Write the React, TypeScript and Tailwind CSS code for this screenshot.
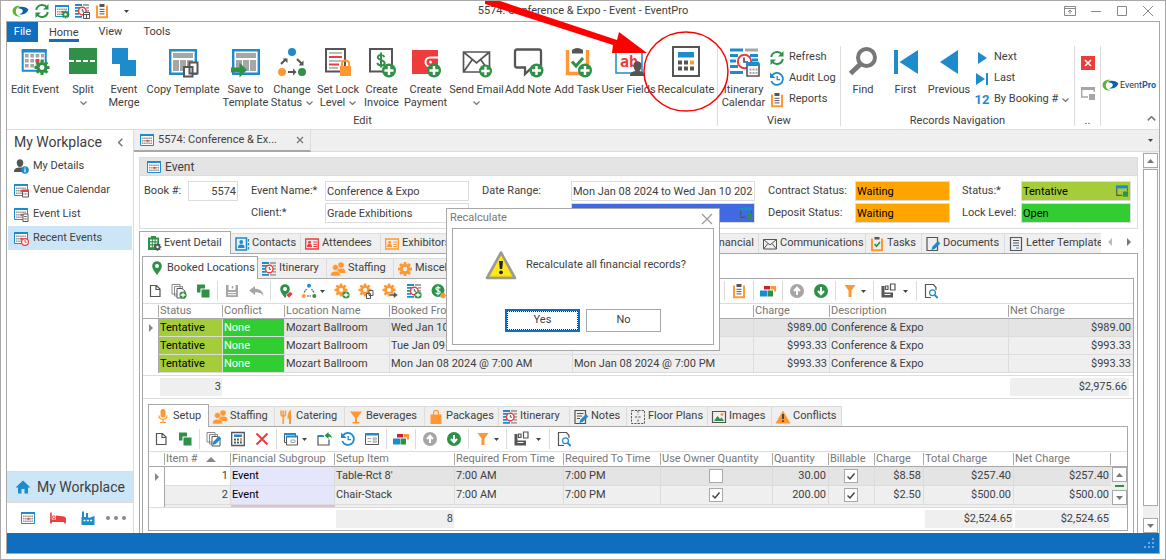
import { useState, type ReactNode } from 'react'
import clsx from 'clsx'

const BLUE = '#1e8bcd'
const GREEN = '#2f9148'
const RED = '#ee3b3b'
const ORANGE = '#ff9832'
const GRAY = '#a6a6a6'
const DARK = '#555555'

/* ---------- icon parts ---------- */

function Svg({ children, box = 16, className = 'size-4' }: { children: ReactNode; box?: number; className?: string }) {
  return (
    <svg viewBox={`0 0 ${box} ${box}`} className={clsx('shrink-0', className)} fill="none" aria-hidden="true">
      {children}
    </svg>
  )
}

function Plus({ x, y, r }: { x: number; y: number; r: number }) {
  return (
    <g>
      <circle cx={x} cy={y} r={r} fill={GREEN} />
      <path d={`M${x - r * 0.65} ${y}h${r * 1.3}M${x} ${y - r * 0.65}v${r * 1.3}`} stroke="#fff" strokeWidth={r * 0.35} />
    </g>
  )
}

function Gear({ x, y, r, color = ORANGE, hole = '#fff' }: { x: number; y: number; r: number; color?: string; hole?: string }) {
  return (
    <g transform={`translate(${x} ${y})`} fill={color}>
      <circle r={r * 0.74} />
      {[0, 45, 90, 135].map((a) => (
        <rect key={a} x={-r * 0.2} y={-r} width={r * 0.4} height={r * 2} transform={`rotate(${a})`} />
      ))}
      <circle r={r * 0.32} fill={hole} />
    </g>
  )
}

function CalendarGrid({ children }: { children?: ReactNode }) {
  return (
    <Svg>
      <path d="M1.5 2.5h13v11h-13z" fill="#fff" stroke={BLUE} />
      <path d="M1 2h14v2H1z" fill={BLUE} />
      <path d="M3 6.2h10M3 8.7h10M3 11.2h10" stroke="#999" strokeWidth="1.5" strokeDasharray="1.6 .5" />
      <path d="M7.5 7.8h2v2h-2z" fill={RED} />
      {children}
    </Svg>
  )
}

const CalendarGear = () => <CalendarGrid><Gear x={11.5} y={11.5} r={4} color={GREEN} /></CalendarGrid>
const CalendarRed = () => (
  <CalendarGrid>
    <path d="M9.5 8.5h6v6.500h-6z" fill="#fff" stroke={DARK} /><path d="M9 7.500h7v2.500H9z" fill={RED} />
    <path d="M10.5 12h4" stroke={DARK} strokeDasharray="1 .5" />
  </CalendarGrid>
)
const CalendarList = () => (
  <CalendarGrid>
    <path d="M10 8h5v7.5h-5z" fill="#fff" stroke={DARK} /><path d="M11.3 10.5h2.4M11.3 13h2.4" stroke={DARK} />
  </CalendarGrid>
)
const CalendarClock = () => (
  <CalendarGrid>
    <circle cx="12" cy="12" r="3.4" fill="#fff" stroke={RED} strokeWidth="1.2" /><path d="M12 10v2.2h1.5" stroke={RED} />
  </CalendarGrid>
)

function Itinerary({ badge }: { badge?: 'cal' | 'plus' }) {
  return (
    <Svg>
      <path d="M1 2h7M1 4.8h5M1 7.800h4M1 10.800h4M1 13.800h7" stroke={BLUE} strokeWidth="1.8" />
      <path d="M9 2h6M12 4.8h3M12 7.8h3M12 10.8h3M9 13.8h6" stroke={GRAY} strokeWidth="1.8" />
      <circle cx="8.3" cy="8" r="3.8" fill="#fff" stroke={RED} strokeWidth="1.4" />
      <path d="M8.3 6v2.2H10" stroke={DARK} />
      {badge === 'cal' && <path d="M9.5 9.5h6v6h-6zM9.5 11.5h6M12.5 11.5v4" fill="#fff" stroke={DARK} />}
      {badge === 'plus' && <Plus x={12} y={12} r={3.6} />}
    </Svg>
  )
}

const Refresh = () => (
  <Svg>
    <path d="M2.2 7A6 6 0 0 1 13 4.5M13.8 9A6 6 0 0 1 3 11.5" stroke={GREEN} strokeWidth="2" />
    <path d="M14.5 1v5.5H9zM1.5 15V9.5H7z" fill={GREEN} />
  </Svg>
)
const History = () => (
  <Svg>
    <path d="M3 4.5A6 6 0 1 1 2.3 10" stroke={BLUE} strokeWidth="1.8" /><path d="M1 1.5v5.5h5.5z" fill={BLUE} />
    <path d="M8.2 5v3.7H11" stroke={BLUE} strokeWidth="1.3" />
  </Svg>
)
const Clipboard = () => (
  <Svg>
    <path d="M3 2.5v11.7h10V2.5" stroke={ORANGE} strokeWidth="2" /><path d="M5.5 1h5v3h-5z" fill={DARK} />
    <path d="M5.5 6.3h5M5.5 8.6h5M5.5 10.9h5" stroke={DARK} />
  </Svg>
)
const Task = () => (
  <Svg>
    <path d="M3 2.5v11.7h10V2.5" stroke={ORANGE} strokeWidth="2" /><path d="M5.5 1h5v2.5h-5z" fill={DARK} />
    <path d="m5.5 8 2 2.3L11 6" stroke={GREEN} strokeWidth="1.6" />
  </Svg>
)
const PersonInfo = () => (
  <Svg>
    <path d="M3.7 4.5c0-4.5 6.600-4.500 6.600 0 0 2.500-1.300 4.500-3.300 4.500S3.700 7 3.700 4.500zM1 14c0-3.500 2.500-4.500 6-4.500h2V14z" fill={DARK} />
    <circle cx="12" cy="12" r="3.8" fill={BLUE} /><path d="M12 11.3v3M12 9.4v1.2" stroke="#fff" strokeWidth="1.3" />
  </Svg>
)
const Building = () => (
  <Svg>
    <path d="M2 2.5h3V1h5v1.5h3V15H2z" fill={GREEN} />
    <path d="M4 5.300h7.500M4 8.300h7.500M4 11.300h4" stroke="#fff" strokeWidth="1.8" strokeDasharray="1.800 1" />
    <Gear x={11.5} y={12} r={3.8} color={DARK} />
  </Svg>
)
const ContactBook = () => (
  <Svg>
    <path d="M2 2h10.5v12H2z" stroke={BLUE} strokeWidth="1.5" /><path d="M14.5 3v2.5M14.5 7v2.5M14.5 11v2.5" stroke={BLUE} strokeWidth="1.3" />
    <circle cx="7.2" cy="6" r="1.9" fill={BLUE} /><path d="M4 12c0-3 1-3.5 3.2-3.5s3.3.5 3.3 3.5z" fill={BLUE} />
  </Svg>
)
const Badge = ({ color }: { color: string }) => (
  <Svg>
    <path d="M1.7 3h12.6v10H1.7z" stroke={color} strokeWidth="1.3" />
    <circle cx="5.5" cy="6.3" r="1.5" fill={color} /><path d="M3 11c0-2.5 1-3 2.500-3S8 8.500 8 11z" fill={color} />
    <path d="M9.3 6H13M9.3 8.3H13M9.3 10.5H13" stroke={color} />
  </Svg>
)
const Mail = () => (
  <Svg>
    <path d="M1.5 3.5h13v9.5h-13zM1.5 3.5 8 9l6.5-5.5M1.5 13 6 7.5M14.5 13 10 7.5" stroke={DARK} />
  </Svg>
)
const Pencil = () => <path d="m6.5 14 .8-3.2 5.7-5.7 2.3 2.3-5.7 5.7z" fill={BLUE} />
const DocumentEdit = () => (
  <Svg><path d="M2 1.5h10.5v13H2z" stroke={DARK} strokeWidth="1.2" /><Pencil /></Svg>
)
const NoteEdit = () => (
  <Svg>
    <path d="M2 1.5h10.5v13H2z" stroke={DARK} strokeWidth="1.2" /><path d="M4 4.5h6.5M4 7h5M4 9.5h3" stroke={DARK} /><Pencil />
  </Svg>
)
const Letter = () => (
  <Svg>
    <path d="M2.5 1.5h11v13h-11z" stroke={DARK} strokeWidth="1.2" /><path d="M5 4.5h6M5 7h6" stroke={DARK} />
    <path d="M5 9.5h6M8 12h3" stroke={BLUE} />
  </Svg>
)
const Pin = ({ tag }: { tag?: boolean }) => (
  <Svg>
    <path d="M8 15C5 11 3.2 8.5 3.2 6a4.8 4.8 0 0 1 9.6 0C12.8 8.5 11 11 8 15z" fill={GREEN} /><circle cx="8" cy="6" r="2" fill="#fff" />
    {tag && <path d="m9 12 4-3.5L16 11l-4 4z" fill={RED} stroke="#fff" strokeWidth=".6" />}
  </Svg>
)
const People = () => (
  <Svg>
    <circle cx="11" cy="4" r="2.8" fill={ORANGE} /><path d="M6.5 12c0-4 2-4.500 4.500-4.500s4.500.5 4.500 4.500z" fill={ORANGE} />
    <circle cx="5.5" cy="6.5" r="3" fill={ORANGE} stroke="#eee" strokeWidth=".6" />
    <path d="M.5 15c0-4 2-4.800 5-4.800s5 .8 5 4.800z" fill={ORANGE} stroke="#eee" strokeWidth=".6" />
  </Svg>
)
const GearIcon = () => <Svg><Gear x={8} y={8} r={7} hole="#efefef" /></Svg>
const GearPlus = () => <Svg><Gear x={7} y={7} r={6.5} /><Plus x={12} y={12} r={3.6} /></Svg>
const GearCopy = () => (
  <Svg>
    <Gear x={7} y={7} r={6.5} /><path d="M11 7.5h4v5h-4zM8.500 10.5h4v5h-4z" fill="#fff" stroke={DARK} />
  </Svg>
)
const GearArrow = () => (
  <Svg>
    <Gear x={7} y={7} r={6.5} /><path d="M7 11h4.5V8.500L16 12l-4.500 3.500V13H7z" fill={DARK} stroke="#fff" strokeWidth=".5" />
  </Svg>
)
const Mic = () => (
  <Svg>
    <rect x="5.5" y="1" width="5" height="8.5" rx="2.5" fill={ORANGE} /><path d="M4 7.500c0 5 8 5 8 0M8 11.5V14M5 14.5h6" stroke={ORANGE} strokeWidth="1.2" />
  </Svg>
)
const Cutlery = () => (
  <Svg>
    <path d="M3 1.5V5c0 3 4.5 3 4.5 0V1.500M5.200 1.500V15" stroke={ORANGE} strokeWidth="1.5" /><path d="M13 1v14h-2V9.500H9.500C9.500 4 11 1.500 13 1z" fill={ORANGE} />
  </Svg>
)
const Drink = () => <Svg><path d="M2 2.5h12L9 9v4h2.5v1.5h-7V13H7V9z" fill={ORANGE} /></Svg>
const Bag = () => (
  <Svg><path d="M2.5 5.5h11V15h-11z" fill={ORANGE} /><path d="M5.5 8V4c0-3.500 5-3.500 5 0v4" stroke={ORANGE} strokeWidth="1.2" /></Svg>
)
const FloorPlan = () => (
  <Svg>
    <path d="M1.5 1.5h13v13h-13zM8 1.5v4M8 10.5v4M5 8h6" stroke={DARK} strokeDasharray="2.2 1.2" />
  </Svg>
)
const Picture = () => (
  <Svg>
    <path d="M1.5 2.5h13v11h-13z" stroke={DARK} strokeWidth="1.2" /><path d="m3 12 3.5-5 2.5 3 1.5-1.5 2.5 3.5z" fill={GREEN} /><circle cx="11" cy="5.5" r="1.4" fill={ORANGE} />
  </Svg>
)
const Conflict = () => (
  <Svg><path d="M8 1.5 15.5 14.5H.5z" fill={ORANGE} /><path d="M8 5v5M8 11.3v1.8" stroke="#333" strokeWidth="1.6" /></Svg>
)
const NewDoc = () => <Svg><path d="M3.5 2.5h6l3.5 3.5v7.500H3.500zM9 2.5V6.500h4" stroke={DARK} strokeWidth="1.2" /></Svg>
const Copies = ({ edit }: { edit?: boolean }) => (
  <Svg>
    <path d="M1 1.5h8V11H1zM3.5 3.5h8V13h-8z" fill="#fff" stroke="#888" /><path d="M6 5.5h5l3 2.5v7H6z" fill="#fff" stroke={DARK} />
    {edit ? <Pencil /> : <Plus x={12} y={12} r={3.6} />}
  </Svg>
)
const Duplicate = () => <Svg><path d="M2 1.5h8v4H5.5v4H2zM6.5 6.5h8v8h-8z" fill={GREEN} /></Svg>
const Save = () => (
  <Svg>
    <path d="M2 2h12v12H2z" fill={GRAY} /><path d="M5 2h6v4.5H5zM4 9.500h8M4 11.700h8" fill="#fff" stroke="#fff" /><path d="M8.5 3v2.5" stroke={GRAY} strokeWidth="1.5" />
  </Svg>
)
const Undo = () => <Svg><path d="M1 7.5 7 3v2.800c4.500 0 8 2.200 8.500 7.200C13.500 10 11 9.300 7 9.300V12z" fill={GRAY} /></Svg>
const StatusFlow = () => (
  <Svg>
    <circle cx="8" cy="2.7" r="2" fill={BLUE} /><circle cx="2.7" cy="13" r="2" fill={ORANGE} /><circle cx="13.3" cy="13" r="2" fill={GREEN} />
    <path d="M3 9.5 5.5 6M13 9.5 10.500 6M6 13h4" stroke={DARK} strokeWidth="1.2" strokeDasharray="2 .6" />
  </Svg>
)
const Money = () => (
  <Svg>
    <circle cx="8" cy="7.5" r="6.5" fill={GREEN} /><path d="M10.3 5.300C9 3.600 5.700 4.200 5.900 6c.2 1.700 4.200 1.300 4.300 3.100C10.300 11 7 11.300 5.600 9.600M8 2.800v9.500" stroke="#fff" strokeWidth="1.2" />
    <Gear x={13} y={12.5} r={3} hole={ORANGE} />
  </Svg>
)
const Blocks = () => (
  <Svg>
    <path d="M0 7.5h7v6H0z" fill={BLUE} /><path d="M7.500 7.500H13v6H7.500z" fill={GREEN} /><path d="M4 3h6v3.500H4z" fill="#d02030" /><path d="M10.500 3H16v5.500h-2V6.500h-3.500z" fill={ORANGE} />
  </Svg>
)
const CircleArrow = ({ up }: { up?: boolean }) => (
  <Svg>
    <circle cx="8" cy="8" r="7" fill={up ? GRAY : GREEN} />
    <path d={up ? 'M8 12V5.500M5 8l3-3.200L11 8' : 'M8 4v6.500M5 8l3 3.200L11 8'} stroke="#fff" strokeWidth="2" />
  </Svg>
)
const Filter = () => <Svg><path d="M2.5 2h11L9.500 7.500V14h-3V7.500z" fill={ORANGE} /></Svg>
const SaveLayout = () => (
  <Svg>
    <path d="M1.5 3v11.5H13V9.500H4.500V3z" fill={DARK} /><path d="M4.5 11.5h6" stroke="#fff" /><path d="M5.5 3h2.500v3.500H5.500zM10.500 1h4.500v6h-4.500z" stroke={DARK} strokeWidth="1.2" />
  </Svg>
)
const Preview = () => (
  <Svg>
    <path d="M13 7V4.500L10.500 1.500H2.500v13H8" stroke={DARK} strokeWidth="1.2" /><circle cx="9.5" cy="9.8" r="2.9" stroke={BLUE} strokeWidth="1.2" /><path d="m11.7 12 3 3" stroke={BLUE} strokeWidth="1.8" />
  </Svg>
)
const Calculator = () => (
  <Svg>
    <path d="M1.7 1.5h12.6v13H1.700z" stroke={DARK} strokeWidth="1.3" /><path d="M4 3.500h8V6H4z" fill={BLUE} />
    <path d="M4 8.5h8M4 11.5h8" stroke={DARK} strokeWidth="1.8" strokeDasharray="1.9 1.1" /><path d="M10 7.600h2v1.800h-2z" fill={ORANGE} />
  </Svg>
)
const Delete = () => <Svg><path d="m2.5 2.5 11 11M13.5 2.5l-11 11" stroke={RED} strokeWidth="2" /></Svg>
const Windows = () => (
  <Svg>
    <path d="M1.5 2.5h11v9h-11z" stroke={DARK} /><path d="M3.5 5.5h11V14h-11z" fill="#fff" stroke={DARK} /><path d="M1 2h12v2H1zM3 4.500h12v2H3z" fill={BLUE} /><path d="M8 9h4v2.500H8z" stroke={GRAY} />
  </Svg>
)
const FolderOut = () => (
  <Svg>
    <path d="M8 5.5H2V14h11V8.500" stroke={DARK} strokeWidth="1.2" /><path d="M1.5 4h6v2h-6z" fill={BLUE} /><path d="m8.500 4.500 4-3.500v2c2 0 3 1.500 3.500 4.500-1-1.500-2-1.700-3.500-1.700V8z" fill={GREEN} />
  </Svg>
)
const FormIcon = () => (
  <Svg>
    <path d="M1.5 3h13v10.5h-13z" stroke={DARK} /><path d="M1 2h14v2.500H1z" fill={BLUE} /><path d="M3.500 7.500H7M3.500 10.500H7M9 7h3.500v1.200H9zM9 10h3.500v1.200H9z" stroke={GRAY} />
  </Svg>
)
const Lookup = () => (
  <Svg className="size-3.5">
    <path d="M2 4v9h6" stroke={DARK} strokeWidth="1.3" /><path d="M1 1.500h14V5H1z" fill={BLUE} /><path d="M14.300 5v3" stroke={DARK} /><path d="M9 8.500h6v6H9z" fill={GREEN} />
  </Svg>
)
const Bed = () => (
  <Svg>
    <path d="M1 2.5v11M15 13.5V8" stroke={RED} strokeWidth="1.6" /><path d="M.2 9.500h15.600V12H.2zM6 5.500l8 1q1.800.3 1.800 2v2H6z" fill={RED} /><circle cx="3.800" cy="7.300" r="1.400" stroke={RED} />
  </Svg>
)
const Factory = () => (
  <Svg><path d="M2 7V1.500h2V7h2V3h2v4h.5v1L14.500 6v9h-13V7z" fill={BLUE} /><path d="M3.500 10.500h9" stroke="#fff" strokeWidth="1.500" strokeDasharray="2 1.300" /></Svg>
)
const House = () => <Svg><path d="M8 1.5 15.500 8.500H13V14.500H9.500V10h-3v4.500H3V8.500H.5z" fill={BLUE} /></Svg>

function Swirl({ className }: { className: string }) {
  return (
    <svg viewBox="0 0 18 14" className={className} aria-hidden="true">
      <path d="M9 1C4 0 0 3 .5 7c.4 3.800 4.500 6 9 5.500C6 12 3.800 9.500 4 6.800 4.200 4 6 2 9 1z" fill="#62b32e" />
      <path d="M6 3.500C9 1 15 1.500 17.500 5 15.500 9.500 11 11 7.500 10c2.800-.6 4.200-2.200 4-3.800C11.300 4.500 9 3.500 6 3.500z" fill="#0f61ad" />
    </svg>
  )
}

const Caret = () => (
  <svg viewBox="0 0 5 3" className="h-[3px] w-[5px] shrink-0" aria-hidden="true"><path d="M0 0h5L2.5 3z" fill="#444" /></svg>
)
const Chevron = ({ className = 'h-1 w-[7px]' }: { className?: string }) => (
  <svg viewBox="0 0 7 4" className={clsx('inline-block shrink-0', className)} fill="none" aria-hidden="true">
    <path d="m.5.5 3 3 3-3" stroke="#777" strokeWidth="1.2" />
  </svg>
)

/* ---------- ribbon icons, drawn on a 30px box ---------- */

const TemplateFrame = () => (
  <g>
    <path d="M2.2 3.2h25.600v23.600H2.200z" fill="#fff" stroke={BLUE} strokeWidth="2.4" />
    <path d="M5 6h20v5H5zM5 13h6v11H5zM12 13h6v11h-6zM19 13h6v11h-6z" fill={GRAY} />
  </g>
)

const big = {
  edit: (
    <>
      <path d="M2.7 4h23v19.700h-23z" fill="#fff" stroke={BLUE} strokeWidth="2" /><path d="M1.700 2h25v3.500h-25z" fill={BLUE} />
      <path d="M5 8.700h19M5 13.700h19M5 18.700h12" stroke={GRAY} strokeWidth="3.6" strokeDasharray="3.7 1.6" /><path d="M15.600 12h3.700v3.500h-3.700z" fill={RED} />
      <Gear x={22} y={20.5} r={7.5} color={GREEN} />
    </>
  ),
  split: <><path d="M1 1h28v26H1z" fill={GREEN} /><path d="M1 14h28" stroke="#fff" strokeWidth="2" strokeDasharray="5 2" /></>,
  merge: <path d="M3 1h16v12h8v16H11V17H3z" fill={BLUE} />,
  copy: <><TemplateFrame /><path d="M21.5 15.5h8v11h-8zM16 20h8.500v9.500H16z" fill="#fff" stroke={DARK} strokeWidth="2" /></>,
  saveTo: <><TemplateFrame /><path d="M0 20.5h8.500v-5L16 23l-7.500 7.500v-5H0z" fill={GREEN} /></>,
  status: (
    <>
      <circle cx="15" cy="5" r="4" fill={BLUE} /><circle cx="5" cy="25" r="4" fill={ORANGE} /><circle cx="25" cy="25" r="4" fill={GREEN} />
      <path d="m4 17 5-5M20 12l5 5M11 25h6" stroke={DARK} strokeWidth="2" /><path d="M5.5 11.500H10.500V16zM26.500 13.500V18.500H21.500zM16 21.500l3.500 3.500-3.500 3.500z" fill={DARK} />
    </>
  ),
  lock: (
    <>
      <path d="M3 2h19v22.5H3z" stroke={DARK} strokeWidth="2" /><path d="M6 6h13M6 14h13M6 21h9" stroke={GRAY} strokeWidth="1.5" /><path d="M6 10h13M6 17.500h10" stroke={RED} strokeWidth="2" />
      <path d="M17 19h11v10H17z" fill={ORANGE} /><path d="M19 19v-2.500c0-4 7-4 7 0V19" stroke={ORANGE} strokeWidth="2" />
    </>
  ),
  invoice: (
    <>
      <path d="M3 2h22v22.5H3z" stroke={DARK} strokeWidth="2" /><path d="M17.500 10C16 7 10.500 7.500 10.800 10.500c.3 3 6.700 2.200 6.900 5.500.1 3-6 3.500-7.500 0M14 5.500v15" stroke={GREEN} strokeWidth="2" />
      <Plus x={22} y={23.5} r={7} />
    </>
  ),
  payment: (
    <>
      <path d="M1 3h26v24H1z" fill={RED} /><path d="M27 10.500h-8a4.500 4.500 0 0 0 0 9h8" fill={RED} stroke="#fff" strokeWidth="2" /><circle cx="19.5" cy="15" r="1.5" fill="#fff" />
      <Plus x={23} y={23.5} r={7} />
    </>
  ),
  email: <><path d="M1.5 5h26v20h-26zM1.5 5 14.5 16 27.500 5M1.500 25 10 13M27.500 25 19 13" stroke={DARK} strokeWidth="1.7" /><Plus x={23.5} y={24} r={6.5} /></>,
  note: <><path d="M4 2.5h22q2 0 2 2v14q0 2-2 2H19L12 27v-6.500H4q-2 0-2-2v-14q0-2 2-2z" stroke={DARK} strokeWidth="2.3" /><Plus x={23.5} y={23.5} r={7} /></>,
  task: (
    <>
      <path d="M5.5 3v23.5h20V3" stroke={ORANGE} strokeWidth="3.4" /><path d="M10 3q5-4 11 0v3.500H10z" fill={DARK} /><path d="m10 14.500 4 4.500 7-8" stroke={GREEN} strokeWidth="3" />
      <Plus x={23} y={23.5} r={7} />
    </>
  ),
  fields: (
    <>
      <path d="M2 5h26v21H2z" fill="#fff" stroke={BLUE} strokeWidth="1.5" />
      <text x="6" y="20" fill={RED} fontFamily="DejaVu Sans Mono" fontWeight="bold" fontSize="15">ab</text>
      <path d="M19.5 18c0-5 8-5 8 0 0 3-1 5-2 6 3 .6 5 1.500 5 5H16c0-3.500 2-4.400 5.500-5-1-1-2-3-2-6z" fill={DARK} />
    </>
  ),
  recalc: (
    <>
      <path d="M2 0h26v29H2z" fill="#fff" stroke={DARK} strokeWidth="2" /><path d="M7 5h16v5.500H7z" fill={BLUE} />
      <path d="M7 15.500h10M7 21.500h16" stroke={DARK} strokeWidth="4" strokeDasharray="4 2" /><path d="M19 13.500h4v4h-4z" fill={ORANGE} />
    </>
  ),
  itinerary: (
    <>
      <path d="M1 3h13M1 8.500h8M1 14h6M1 19.500h8M1 25.500h13" stroke={BLUE} strokeWidth="3" /><path d="M16 3h13" stroke={GRAY} strokeWidth="3" /><path d="M21 8.500h8M23 13h6" stroke={BLUE} strokeWidth="3" />
      <circle cx="15.500" cy="14.500" r="6.700" fill="#fff" stroke={RED} strokeWidth="2" /><path d="M15 10.500V15h4" stroke={DARK} strokeWidth="1.7" />
      <path d="M18 17h12v12H18z" fill="#fff" stroke={DARK} strokeWidth="1.6" /><path d="M17.200 15h13v4h-13z" fill={BLUE} /><path d="M20.500 22.500h8M20.500 26h8" stroke={GRAY} strokeWidth="2" strokeDasharray="2 1" />
    </>
  ),
  find: <><circle cx="18.5" cy="10.500" r="8.500" stroke="#777" strokeWidth="4" /><path d="m12 17.500-9.500 9" stroke="#777" strokeWidth="5" /></>,
  first: <path d="M3 3h4v24H3zM27 3v24L8.500 15z" fill={BLUE} />,
  previous: <path d="M24 3v24L6 15z" fill={BLUE} />,
}

/* ---------- ribbon ---------- */

interface RibbonItem {
  icon: keyof typeof big
  label: string
  second?: string
  drop?: boolean
  width: string
}

const editItems: RibbonItem[] = [
  { icon: 'edit', label: 'Edit Event', width: 'w-[54px]' },
  { icon: 'split', label: 'Split', drop: true, width: 'w-[42px]' },
  { icon: 'merge', label: 'Event', second: 'Merge', width: 'w-10' },
  { icon: 'copy', label: 'Copy Template', width: 'w-[78px]' },
  { icon: 'saveTo', label: 'Save to', second: 'Template', width: 'w-[47px]' },
  { icon: 'status', label: 'Change', second: 'Status', drop: true, width: 'w-[46px]' },
  { icon: 'lock', label: 'Set Lock', second: 'Level', drop: true, width: 'w-[46px]' },
  { icon: 'invoice', label: 'Create', second: 'Invoice', width: 'w-[41px]' },
  { icon: 'payment', label: 'Create', second: 'Payment', width: 'w-[47px]' },
  { icon: 'email', label: 'Send Email', drop: true, width: 'w-[55px]' },
  { icon: 'note', label: 'Add Note', width: 'w-12' },
  { icon: 'task', label: 'Add Task', width: 'w-[50px]' },
  { icon: 'fields', label: 'User Fields', width: 'w-[53px]' },
  { icon: 'recalc', label: 'Recalculate', width: 'w-[62px]' },
]

const navItems: RibbonItem[] = [
  { icon: 'find', label: 'Find', width: 'w-11' },
  { icon: 'first', label: 'First', width: 'w-[41px]' },
  { icon: 'previous', label: 'Previous', width: 'w-[46px]' },
]

function RibbonButton({ item, onClick }: { item: RibbonItem; onClick?: () => void }) {
  return (
    <button type="button" onClick={onClick} className={clsx('flex shrink-0 flex-col items-center whitespace-nowrap leading-[13px]', item.width)}>
      <Svg box={30} className="mb-[6px] size-[30px] overflow-visible">{big[item.icon]}</Svg>
      <span>{item.label}</span>
      {(item.second || item.drop) && (
        <span className="flex h-[13px] items-center gap-1">
          {item.second}
          {item.drop && <Chevron />}
        </span>
      )}
    </button>
  )
}

function RibbonGroup({ caption, children, className }: { caption: string; children: ReactNode; className?: string }) {
  return (
    <section className={clsx('my-1 flex h-20 shrink-0 flex-col justify-between border-r border-[#dcdcdc]', className)}>
      <div className="flex items-start pt-px">{children}</div>
      <div className="text-center leading-[11px]">{caption}</div>
    </section>
  )
}

function SmallButton({ icon, children }: { icon: ReactNode; children: ReactNode }) {
  return (
    <button type="button" className="flex h-[21px] items-center gap-1 whitespace-nowrap">
      <span className="flex w-4 justify-center">{icon}</span>
      {children}
    </button>
  )
}

function Ribbon({ onRecalculate }: { onRecalculate: () => void }) {
  return (
    <div className="flex h-[88px] border-b border-[#dcdcdc]">
      <RibbonGroup caption="Edit" className="pl-px">
        {editItems.map((item) => (
          <RibbonButton key={item.icon} item={item} onClick={item.icon === 'recalc' ? onRecalculate : undefined} />
        ))}
      </RibbonGroup>
      <RibbonGroup caption="View">
        <RibbonButton item={{ icon: 'itinerary', label: 'Itinerary', second: 'Calendar', width: 'w-[51px]' }} />
        <div className="w-[71px]">
          <SmallButton icon={<Refresh />}>Refresh</SmallButton>
          <SmallButton icon={<History />}>Audit Log</SmallButton>
          <SmallButton icon={<Clipboard />}>Reports</SmallButton>
        </div>
      </RibbonGroup>
      <RibbonGroup caption="Records Navigation">
        {navItems.map((item) => <RibbonButton key={item.icon} item={item} />)}
        <div className="w-[102px] pl-[2px]">
          <SmallButton icon={<Svg><path d="M4 2v12l9-6z" fill={BLUE} /></Svg>}>Next</SmallButton>
          <SmallButton icon={<Svg><path d="M2 2v12l9-6zM12 2h2v12h-2z" fill={BLUE} /></Svg>}>Last</SmallButton>
          <SmallButton icon={<b className="text-[13px] text-[#1e8bcd]">12</b>}>By Booking # <Chevron /></SmallButton>
        </div>
      </RibbonGroup>
      <RibbonGroup caption=".." className="w-[26px]">
        <div className="flex w-full flex-col items-center gap-4 pt-[9px]">
          <button type="button" aria-label="Close record" className="flex size-3.5 bg-[#ee3b3b]">
            <Svg box={14} className="size-3.5"><path d="m4 4 6 6M10 4l-6 6" stroke="#fff" strokeWidth="1.5" /></Svg>
          </button>
          <button type="button" aria-label="Window">
            <Svg box={14} className="size-3.5"><path d="M.7 2v9H7M13.300 2v4" stroke={GRAY} strokeWidth="1.4" /><path d="M0 1h14v3H0zM8 8h6v6H8z" fill={GRAY} /></Svg>
          </button>
        </div>
      </RibbonGroup>
      <div className="flex flex-1 flex-col justify-between pb-[2px] pt-[37px]">
        <div className="flex items-center gap-px pl-px">
          <Swirl className="h-[13px] w-[17px] shrink-0" />
          <span className="text-[9px] leading-[13px] text-[#333]">Event<b className="text-[#0f61ad]">Pro</b></span>
        </div>
        <button type="button" aria-label="Collapse ribbon" className="mr-[3px] self-end">
          <Chevron className="h-[5px] w-[9px] rotate-180" />
        </button>
      </div>
    </div>
  )
}

/* ---------- tabs and toolbars ---------- */

interface TabItem {
  label: string
  icon: ReactNode
  width: string
  end?: boolean
}

const eventTabs: TabItem[] = [
  { label: 'Event Detail', icon: <Building />, width: 'w-[92px]' },
  { label: 'Contacts', icon: <ContactBook />, width: 'w-[70px]' },
  { label: 'Attendees', icon: <Badge color={RED} />, width: 'w-20' },
  { label: 'Exhibitors', icon: <Badge color={ORANGE} />, width: 'w-20' },
  { label: 'Financial', icon: <Money />, width: 'w-[298px]', end: true },
  { label: 'Communications', icon: <Mail />, width: 'w-[107px]' },
  { label: 'Tasks', icon: <Task />, width: 'w-14' },
  { label: 'Documents', icon: <DocumentEdit />, width: 'w-[83px]' },
  { label: 'Letter Templates', icon: <Letter />, width: 'w-[110px]' },
]

const locationTabs: TabItem[] = [
  { label: 'Booked Locations', icon: <Pin />, width: 'w-[116px]' },
  { label: 'Itinerary', icon: <Itinerary />, width: 'w-[69px]' },
  { label: 'Staffing', icon: <People />, width: 'w-[67px]' },
  { label: 'Miscellaneous', icon: <GearIcon />, width: 'w-[98px]' },
]

const setupTabs: TabItem[] = [
  { label: 'Setup', icon: <Mic />, width: 'w-[61px]' },
  { label: 'Staffing', icon: <People />, width: 'w-[66px]' },
  { label: 'Catering', icon: <Cutlery />, width: 'w-[70px]' },
  { label: 'Beverages', icon: <Drink />, width: 'w-20' },
  { label: 'Packages', icon: <Bag />, width: 'w-[74px]' },
  { label: 'Itinerary', icon: <Itinerary />, width: 'w-[71px]' },
  { label: 'Notes', icon: <NoteEdit />, width: 'w-[57px]' },
  { label: 'Floor Plans', icon: <FloorPlan />, width: 'w-[81px]' },
  { label: 'Images', icon: <Picture />, width: 'w-16' },
  { label: 'Conflicts', icon: <Conflict />, width: 'w-[70px]' },
]

function TabStrip({ tabs, children }: { tabs: TabItem[]; children?: ReactNode }) {
  return (
    <div className="flex h-[23px] shrink-0 border-b border-[#a8a8a8]">
      <div role="tablist" className="-mb-px flex min-w-0 flex-1 items-end overflow-hidden">
        {tabs.map((tab, i) => (
          <button
            key={tab.label}
            type="button"
            role="tab"
            aria-selected={i === 0}
            className={clsx(
              'flex shrink-0 items-center gap-[2px] whitespace-nowrap border-t',
              tab.width,
              i === 0 ? 'h-[23px] border-x border-[#a8a8a8] bg-white pl-[6px]' : 'mb-px h-5 border-r border-[#dcdcdc] bg-[#efefef] pl-[3px]',
              tab.end && 'justify-end pr-1',
            )}
          >
            {tab.icon}
            {tab.label}
          </button>
        ))}
      </div>
      {children}
    </div>
  )
}

function Tool({ label, drop, children }: { label: string; drop?: 'near' | 'far'; children: ReactNode }) {
  return (
    <button
      type="button"
      aria-label={label}
      title={label}
      className={clsx('flex h-6 shrink-0 items-center pl-1', !drop && 'w-6', drop === 'near' && 'w-[33px] gap-[3px]', drop === 'far' && 'w-[38px] gap-[7px]')}
    >
      {children}
      {drop && <Caret />}
    </button>
  )
}

const ToolSep = () => <span className="mx-[2px] h-5 w-px shrink-0 bg-[#dcdcdc]" />

function CommonTools() {
  return (
    <>
      <ToolSep />
      <Tool label="Group"><Blocks /></Tool>
      <ToolSep />
      <Tool label="Move Up"><CircleArrow up /></Tool>
      <Tool label="Move Down"><CircleArrow /></Tool>
      <ToolSep />
      <Tool label="Filter" drop="near"><Filter /></Tool>
      <ToolSep />
      <Tool label="Save Layout" drop="far"><SaveLayout /></Tool>
      <ToolSep />
      <Tool label="Preview"><Preview /></Tool>
    </>
  )
}

/* ---------- grids ---------- */

const bookings = [
  { from: 'Wed Jan 10 2024 @ 7:00 AM', to: 'Wed Jan 10 2024 @ 7:00 PM', charge: '$989.00' },
  { from: 'Tue Jan 09 2024 @ 7:00 AM', to: 'Tue Jan 09 2024 @ 7:00 PM', charge: '$993.33' },
  { from: 'Mon Jan 08 2024 @ 7:00 AM', to: 'Mon Jan 08 2024 @ 7:00 PM', charge: '$993.33' },
]

const setupRows = [
  { no: 1, item: "Table-Rct 8'", owner: false, qty: '30.00', charge: '$8.58', total: '$257.40' },
  { no: 2, item: 'Chair-Stack', owner: true, qty: '200.00', charge: '$2.50', total: '$500.00' },
]

function Th({ children, className }: { children?: ReactNode; className?: string }) {
  return (
    <th className={clsx('h-[15px] border-b border-[#a8a8a8] p-0 text-left font-normal text-[#777]', className)}>
      <div className="flex h-3 items-center gap-2 whitespace-nowrap border-r border-[#a8a8a8] pl-px">{children}</div>
    </th>
  )
}

function Td({ children, className }: { children?: ReactNode; className?: string }) {
  return <td className={clsx('overflow-hidden whitespace-nowrap border-b border-r border-[#dcdcdc] py-0 pl-px pr-[2px]', className)}>{children}</td>
}

function Check({ label, checked }: { label: string; checked: boolean }) {
  return (
    <span className="relative mx-auto block size-3.5">
      <input type="checkbox" aria-label={label} defaultChecked={checked} className="peer block size-3.5 appearance-none border border-[#a8a8a8] bg-white" />
      <svg viewBox="0 0 14 14" className="pointer-events-none absolute inset-0 hidden size-3.5 peer-checked:block" fill="none" aria-hidden="true">
        <path d="m3.5 7.5 2.5 2.5 4.500-5.500" stroke="#444" strokeWidth="1.5" />
      </svg>
    </span>
  )
}

const Marker = ({ show }: { show: boolean }) => (
  <td className="border-r border-[#a8a8a8] bg-white p-0">
    {show && <svg viewBox="0 0 4 8" className="ml-[6px] h-2 w-1" aria-hidden="true"><path d="M0 0v8l4-4z" fill="#888" /></svg>}
  </td>
)

function BookingGrid() {
  return (
    <>
      <table className="w-full table-fixed border-separate border-spacing-0 leading-[14px]">
        <colgroup>
          <col className="w-4" /><col className="w-16" /><col className="w-[62px]" /><col className="w-[105px]" /><col className="w-[183px]" />
          <col className="w-[181px]" /><col className="w-[76px]" /><col className="w-[179px]" /><col />
        </colgroup>
        <thead>
          <tr>
            <Th /><Th>Status</Th><Th>Conflict</Th><Th>Location Name</Th><Th>Booked From</Th><Th>Booked To</Th><Th>Charge</Th><Th>Description</Th>
            <Th className="[&>div]:border-r-0">Net Charge</Th>
          </tr>
        </thead>
        <tbody>
          {bookings.map((b, i) => (
            <tr key={b.from} className={clsx('h-[18px]', i === 0 ? 'bg-[#e4e4e4]' : 'bg-[#efefef]')}>
              <Marker show={i === 0} />
              <Td className="bg-[#a4cd39] text-black">Tentative</Td>
              <Td className="bg-[#32cd32] text-white">None</Td>
              <Td>Mozart Ballroom</Td>
              <Td>{b.from}</Td>
              <Td>{b.to}</Td>
              <Td className="text-right">{b.charge}</Td>
              <Td>Conference &amp; Expo</Td>
              <Td className="border-r-0 text-right">{b.charge}</Td>
            </tr>
          ))}
        </tbody>
      </table>
      <div className="mt-[2px] flex justify-between border-y border-[#dcdcdc] py-[2px] pl-[17px] pr-1 text-right leading-[18px]">
        <div className="w-[62px] bg-[#efefef] pr-px">3</div>
        <div className="w-[119px] bg-[#efefef] pr-[2px]">$2,975.66</div>
      </div>
    </>
  )
}

function SetupGrid() {
  return (
    <>
      <table className="w-full table-fixed border-separate border-spacing-0 leading-[14px]">
        <colgroup>
          <col className="w-4" /><col className="w-[66px]" /><col className="w-[104px]" /><col className="w-[120px]" /><col className="w-[109px]" /><col className="w-[97px]" />
          <col className="w-28" /><col className="w-14" /><col className="w-[46px]" /><col className="w-[49px]" /><col className="w-[90px]" /><col className="w-[97px]" /><col />
        </colgroup>
        <thead>
          <tr>
            <Th />
            <Th>
              Item #
              <svg viewBox="0 0 10 5" className="h-[5px] w-2.5" aria-hidden="true"><path d="M0 5h10L5 0z" fill="#888" /></svg>
            </Th>
            <Th>Financial Subgroup</Th><Th>Setup Item</Th><Th>Required From Time</Th><Th>Required To Time</Th><Th>Use Owner Quantity</Th><Th>Quantity</Th>
            <Th>Billable</Th><Th>Charge</Th><Th>Total Charge</Th><Th>Net Charge</Th><Th className="[&>div]:border-r-0" />
          </tr>
        </thead>
        <tbody>
          {setupRows.map((r, i) => (
            <tr key={r.no} className={clsx('h-[19px]', i === 0 ? 'bg-[#e4e4e4]' : 'bg-[#efefef]')}>
              <Marker show={i === 0} />
              <Td className={clsx('text-right', i === 0 && 'bg-white')}>{r.no}</Td>
              <Td className="bg-[#e6e6fa] text-black">Event</Td>
              <Td>{r.item}</Td>
              <Td>7:00 AM</Td>
              <Td>7:00 PM</Td>
              <Td><Check label="Use Owner Quantity" checked={r.owner} /></Td>
              <Td className="text-right">{r.qty}</Td>
              <Td><Check label="Billable" checked /></Td>
              <Td className="text-right">{r.charge}</Td>
              <Td className="text-right">{r.total}</Td>
              <Td className="border-r-0 text-right">{r.total}</Td>
              {i === 0 && (
                <td rowSpan={2} className="bg-[#efefef] p-0">
                  <div className="flex h-[38px] flex-col items-center justify-between">
                    <ScrollButton />
                    <span className="h-0.5 w-[9px] bg-[#2f9148]" />
                    <ScrollButton down />
                  </div>
                </td>
              )}
            </tr>
          ))}
        </tbody>
      </table>
      {/* top edge of the next row */}
      <div className="flex h-[3px] border-b border-[#dcdcdc] bg-[#efefef]">
        <span className="w-4 border-r border-[#a8a8a8] bg-white" />
        <span className="w-[66px]" />
        <span className="w-[104px] bg-[#d8bfd8]" />
      </div>
      <div className="flex py-[2px] pl-[187px] text-right leading-[18px]">
        <div className="w-[118px] bg-[#efefef] pr-px">8</div>
        <div className="ml-[471px] w-[88px] bg-[#efefef] pr-px">$2,524.65</div>
        <div className="ml-[2px] w-[95px] bg-[#efefef] pr-px">$2,524.65</div>
      </div>
    </>
  )
}

function ScrollButton({ down }: { down?: boolean }) {
  return (
    <button type="button" aria-label={down ? 'Scroll down' : 'Scroll up'} className="flex size-[15px] items-center justify-center border border-[#a8a8a8] bg-white">
      <svg viewBox="0 0 7 4" className={clsx('h-1 w-[7px]', !down && 'rotate-180')} aria-hidden="true"><path d="M0 0h7L3.5 4z" fill="#777" /></svg>
    </button>
  )
}

/* ---------- event header form ---------- */

function Field({ id, label, value, width, tone, lookup }: { id: string; label: string; value: string; width: string; tone?: string; lookup?: boolean }) {
  return (
    <>
      <label htmlFor={id} className="self-center whitespace-nowrap">{label}</label>
      <div className={clsx('relative', width)}>
        <input id={id} defaultValue={value} className={clsx('block h-5 w-full border border-[#dcdcdc] px-px', tone ?? 'bg-white', id === 'book' && 'text-right')} />
        {lookup && <span className="absolute right-[2px] top-[3px]"><Lookup /></span>}
      </div>
    </>
  )
}

function EventForm() {
  return (
    <div className="grid grid-cols-[44px_63px_74px_157px_89px_197px_87px_107px_59px_110px] gap-y-[2px] px-1 py-[5px]">
      <Field id="book" label="Book #:" value="5574" width="w-[50px]" />
      <Field id="name" label="Event Name:*" value="Conference &amp; Expo" width="w-36" />
      <Field id="dates" label="Date Range:" value="Mon Jan 08 2024 to Wed Jan 10 2024" width="w-[184px]" />
      <Field id="contract" label="Contract Status:" value="Waiting" width="w-[95px]" tone="bg-[#ffa500] text-black" />
      <Field id="status" label="Status:*" value="Tentative" width="w-[110px]" tone="bg-[#a4cd39] text-black" lookup />
      <span className="col-span-2" />
      <Field id="client" label="Client:*" value="Grade Exhibitions" width="w-36" />
      <span />
      <div className="relative w-[184px]">
        <input aria-label="Color" className="block h-5 w-full border border-[#dcdcdc] bg-[#4169e1]" />
        <span className="absolute right-[2px] top-[3px]"><Lookup /></span>
      </div>
      <Field id="deposit" label="Deposit Status:" value="Waiting" width="w-[95px]" tone="bg-[#ffa500] text-black" />
      <Field id="lock" label="Lock Level:" value="Open" width="w-[110px]" tone="bg-[#32cd32] text-black" />
    </div>
  )
}

/* ---------- sidebar ---------- */

const links = [
  { label: 'My Details', icon: <PersonInfo /> },
  { label: 'Venue Calendar', icon: <CalendarRed /> },
  { label: 'Event List', icon: <CalendarList /> },
  { label: 'Recent Events', icon: <CalendarClock />, active: true },
]

function Sidebar() {
  return (
    <aside className="flex w-[127px] shrink-0 flex-col border-r border-[#dcdcdc]">
      <div className="flex h-6 items-center justify-between pl-[7px] pr-2">
        <h2 className="text-[14px]">My Workplace</h2>
        <button type="button" aria-label="Collapse" className="flex"><Chevron className="h-[5px] w-[9px] rotate-90" /></button>
      </div>
      <nav className="px-px">
        {links.map((l) => (
          <a key={l.label} href="#" className={clsx('flex h-6 items-center gap-1 pl-[5px]', l.active && 'bg-[#cde6f7]')}>
            {l.icon}
            {l.label}
          </a>
        ))}
      </nav>
      <button type="button" className="mt-auto flex h-8 items-center gap-[6px] border-y border-[#dcdcdc] bg-[#cde6f7] pl-2 text-[14px]">
        <House />
        My Workplace
      </button>
      <div className="flex h-[30px] items-center gap-3.5 pl-[13px]">
        <button type="button" aria-label="Events"><CalendarGrid /></button>
        <button type="button" aria-label="Accommodation"><Bed /></button>
        <button type="button" aria-label="Venues"><Factory /></button>
        <button type="button" aria-label="More" className="-ml-1 flex gap-1">
          <i className="size-1 rounded-full bg-[#888]" /><i className="size-1 rounded-full bg-[#888]" /><i className="size-1 rounded-full bg-[#888]" />
        </button>
      </div>
    </aside>
  )
}

/* ---------- dialog ---------- */

function RecalculateDialog({ onClose }: { onClose: () => void }) {
  return (
    <div className="absolute inset-0 z-10 flex items-center justify-center pb-px">
      <div role="dialog" aria-label="Recalculate" className="w-[274px] border border-[#a8a8a8] bg-white px-[5px] pb-[5px]">
        <div className="-ml-[2px] flex h-[19px] items-center justify-between pr-px text-[#777]">
          Recalculate
          <button type="button" aria-label="Close" onClick={onClose}>
            <Svg box={12} className="size-3"><path d="m1 1 10 10M11 1 1 11" stroke="#999" strokeWidth="1.2" /></Svg>
          </button>
        </div>
        <div className="flex h-[117px] flex-col items-center justify-between border border-[#a8a8a8] pb-3 pt-[21px]">
          <div className="flex w-full gap-[9px] pl-8">
            <Svg box={32} className="size-8">
              <path d="M16 2.5 30 28H2z" fill="#f5d800" stroke="#9a9a9a" strokeWidth="2.6" strokeLinejoin="round" />
              <path d="M16 6 26.500 25.500H5.500z" fill="#ffe81a" />
              <path d="M14 11h4l-.8 8h-2.400z" fill="#222" /><circle cx="16" cy="22.3" r="1.9" fill="#222" />
            </Svg>
            <p className="pt-[7px]">Recalculate all financial records?</p>
          </div>
          <div className="flex gap-[6px]">
            <button type="button" onClick={onClose} className="h-[23px] w-[75px] border-2 border-[#106ebe] p-0">
              <span className="flex h-full items-center justify-center border border-dotted border-[#333]">Yes</span>
            </button>
            <button type="button" onClick={onClose} className="h-[23px] w-[75px] border border-[#a8a8a8]">No</button>
          </div>
        </div>
      </div>
    </div>
  )
}

/* ---------- app ---------- */

export default function App() {
  const [dialogOpen, setDialogOpen] = useState(true)

  return (
    <div className="relative flex min-h-screen flex-col overflow-hidden border border-[#a8a8a8] bg-white px-[5px] pb-[5px] font-['Roboto','Liberation_Sans',sans-serif] text-[11px] text-[#404040]">
      {/* Title bar */}
      <header className="flex h-5 items-center justify-between">
        <div className="flex w-60 items-center gap-1 pl-[6px]">
          <Swirl className="mr-px h-[13px] w-[17px]" />
          <button type="button" aria-label="Refresh"><Refresh /></button>
          <button type="button" aria-label="Edit event"><CalendarGear /></button>
          <button type="button" aria-label="Itinerary calendar"><Itinerary badge="cal" /></button>
          <button type="button" aria-label="Reports"><Clipboard /></button>
          <button type="button" aria-label="Customize" className="pl-2.5"><Caret /></button>
        </div>
        <h1>5574: Conference &amp; Expo - Event - EventPro</h1>
        <div className="flex w-60 items-center justify-end gap-[14px] pr-1.5">
          <button type="button" aria-label="Ribbon options"><Svg box={12} className="size-3"><path d="M.5 1.5h11v9H.5zM.5 3.500h11M6 9V5.500M4 7l2-2 2 2" stroke="#888" /></Svg></button>
          <button type="button" aria-label="Minimize"><Svg box={12} className="size-3"><path d="M1 6.5h10" stroke="#888" /></Svg></button>
          <button type="button" aria-label="Maximize"><Svg box={12} className="size-3"><path d="M1.5 1.5h9v9h-9z" stroke="#888" /></Svg></button>
          <button type="button" aria-label="Close"><Svg box={12} className="size-3"><path d="m1 1 10 10M11 1 1 11" stroke="#888" /></Svg></button>
        </div>
      </header>

      <div className="flex flex-1 flex-col border border-[#a8a8a8]">
        {/* Ribbon tabs */}
        <div className="flex h-5 items-stretch">
          <button type="button" className="w-[31px] bg-[#106ebe] text-white">File</button>
          <button type="button" className="ml-[11px] border-b-[3px] border-[#106ebe] pt-[3px]">Home</button>
          <button type="button" className="ml-5 pt-px">View</button>
          <button type="button" className="ml-[21px] pt-px">Tools</button>
        </div>
        <Ribbon onRecalculate={() => setDialogOpen(true)} />

        <div className="flex flex-1">
          <Sidebar />

          <main className="flex min-w-0 flex-1 flex-col">
            {/* Document tab */}
            <div className="flex h-[22px] items-start justify-between border-b border-[#dcdcdc] bg-[#efefef]">
              <div className="flex h-[22px] w-[177px] items-center border-b-2 border-r border-b-[#a8a8a8] border-r-[#dcdcdc] pl-[5px] pr-[6px]">
                <CalendarGrid />
                <span className="ml-[3px] flex-1">5574: Conference &amp; Ex...</span>
                <button type="button" aria-label="Close tab"><Svg box={8} className="size-2"><path d="m1 1 6 6M7 1 1 7" stroke="#777" strokeWidth="1.2" /></Svg></button>
              </div>
              <button type="button" aria-label="Open tabs" className="mr-1.5 mt-[9px] flex"><Caret /></button>
            </div>

            <div className="flex flex-1">
              <div className="flex min-w-0 flex-1 flex-col px-[5px] pt-[5px]">
                <section className="border border-[#dcdcdc]">
                  <h2 className="flex h-[18px] items-center gap-[3px] border-b border-[#dcdcdc] bg-[#e4e4e4] pl-[6px] text-[12px]">
                    <CalendarGrid />
                    Event
                  </h2>
                  <EventForm />
                </section>

                <div className="mt-[2px] flex flex-1 flex-col">
                  <TabStrip tabs={eventTabs}>
                    <div className="flex w-[37px] items-center justify-around">
                      <button type="button" aria-label="Previous tabs"><Svg box={8} className="size-2"><path d="M6 0v8L2 4z" fill="#bbb" /></Svg></button>
                      <button type="button" aria-label="Next tabs"><Svg box={8} className="size-2"><path d="M2 0v8l4-4z" fill="#777" /></Svg></button>
                    </div>
                  </TabStrip>
                  <div className="flex flex-1 flex-col border-x border-[#a8a8a8] pl-[2px] pr-[3px] pt-[2px]">
                    <TabStrip tabs={locationTabs} />
                    <div className="flex-1 border-x border-[#a8a8a8]">
                      <div className="flex h-[25px] items-center border-b border-[#dcdcdc]">
                        <Tool label="New"><NewDoc /></Tool>
                        <Tool label="Add Multiple"><Copies /></Tool>
                        <Tool label="Duplicate"><Duplicate /></Tool>
                        <ToolSep />
                        <Tool label="Save"><Save /></Tool>
                        <Tool label="Undo"><Undo /></Tool>
                        <ToolSep />
                        <Tool label="Location"><Pin tag /></Tool>
                        <Tool label="Change Status" drop="near"><StatusFlow /></Tool>
                        <Tool label="Add Setup"><GearPlus /></Tool>
                        <Tool label="Copy Setup"><GearCopy /></Tool>
                        <Tool label="Move Setup"><GearArrow /></Tool>
                        <Tool label="Add Itinerary"><Itinerary badge="plus" /></Tool>
                        <Tool label="Charges"><Money /></Tool>
                        <span className="w-[272px] shrink-0" />
                        <ToolSep />
                        <Tool label="Reports"><Clipboard /></Tool>
                        <CommonTools />
                      </div>
                      <BookingGrid />

                      {/* Setup panel */}
                      <div className="mx-[5px] mt-[5px] pb-[2px]">
                        <TabStrip tabs={setupTabs} />
                        <div className="border-x border-b border-[#a8a8a8]">
                          <div className="flex h-[25px] items-center border-b border-[#dcdcdc]">
                            <Tool label="New"><NewDoc /></Tool>
                            <Tool label="Duplicate"><Duplicate /></Tool>
                            <ToolSep />
                            <Tool label="Edit Multiple"><Copies edit /></Tool>
                            <Tool label="Calculate"><Calculator /></Tool>
                            <Tool label="Delete"><Delete /></Tool>
                            <ToolSep />
                            <Tool label="Windows" drop="near"><Windows /></Tool>
                            <Tool label="Open"><FolderOut /></Tool>
                            <Tool label="History"><History /></Tool>
                            <Tool label="Form"><FormIcon /></Tool>
                            <CommonTools />
                          </div>
                          <SetupGrid />
                        </div>
                      </div>
                    </div>
                  </div>
                </div>
              </div>

              {/* Page scrollbar */}
              <div className="mr-px flex w-[15px] flex-col bg-[#efefef] pt-px">
                <ScrollButton />
                <div className="mb-3 mt-px flex-1 border border-[#a8a8a8] bg-white" />
                <ScrollButton down />
              </div>
            </div>
          </main>
        </div>

        {/* Status bar */}
        <footer className="flex h-5 items-end justify-end bg-[#106ebe] p-1">
          <Svg box={11} className="size-[11px]">
            <path d="M8 0h2v2H8zM4 4h2v2H4zM8 4h2v2H8zM0 8h2v2H0zM4 8h2v2H4zM8 8h2v2H8z" fill="#6fa8dc" />
          </Svg>
        </footer>
      </div>

      {/* Callout over the Recalculate button */}
      <svg viewBox="0 0 260 120" className="pointer-events-none absolute left-[478px] top-0 h-[120px] w-[260px]" fill="none" aria-hidden="true">
        <path d="M6 0h15l117 39 2-8 28 21h-35l1-8L6 3z" fill="#ff0000" />
        <ellipse cx="207" cy="70.5" rx="42" ry="39.5" stroke="#ff0000" strokeWidth="1.5" />
      </svg>

      {dialogOpen && <RecalculateDialog onClose={() => setDialogOpen(false)} />}
    </div>
  )
}
